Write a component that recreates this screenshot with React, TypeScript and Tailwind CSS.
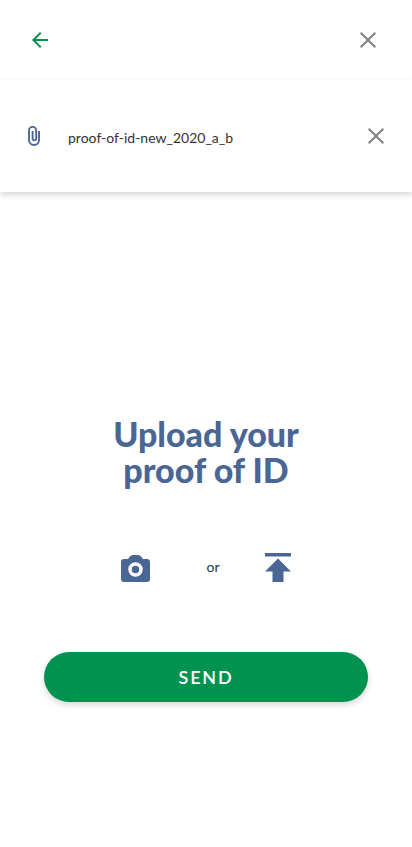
import React from "react";

function CrossIcon() {
  return (
    <svg viewBox="0 0 16 16" className="h-4 w-4" fill="none" stroke="#808080" strokeWidth="2" aria-hidden="true">
      <path d="M0.7 0.7 15.3 15.3M15.3 0.7 0.7 15.3" />
    </svg>
  );
}

function BackIcon() {
  return (
    <svg viewBox="0 0 24 24" className="h-6 w-6" fill="#00924f" aria-hidden="true">
      <path d="M20 11H7.83l5.59-5.59L12 4l-8 8 8 8 1.41-1.41L7.83 13H20v-2z" />
    </svg>
  );
}

function ClipIcon() {
  return (
    <svg viewBox="0 0 12 20" className="h-5 w-3" fill="none" stroke="#4a6694" strokeWidth="1.9" aria-hidden="true">
      <path d="M11 5v9a5 5 0 0 1-10 0V4.500a3.600 3.600 0 0 1 7.200 0V12.600a1.800 1.800 0 0 1-3.600 0V5" />
    </svg>
  );
}

function CameraIcon() {
  return (
    <svg viewBox="0 0 29 27" className="h-[27px] w-[29px]" aria-hidden="true">
      <path
        d="M3 4h3.500C8 4 8.600 0 12 0h5c3.400 0 4 4 5.500 4H26a3 3 0 0 1 3 3v17a3 3 0 0 1-3 3H3a3 3 0 0 1-3-3V7a3 3 0 0 1 3-3z"
        fill="#4a6694"
      />
      <circle cx="14.500" cy="14.500" r="5.500" fill="#4a6694" stroke="#ffffff" strokeWidth="3.500" />
    </svg>
  );
}

function UploadIcon() {
  return (
    <svg viewBox="0 0 26 29" className="h-[29px] w-[26px]" fill="#4a6694" aria-hidden="true">
      <path d="M0 0h26v3.500H0zM13 5.500 26 18.500h-7.500V29h-11V18.500H0z" />
    </svg>
  );
}

export default function App() {
  return (
    <div className="flex min-h-screen flex-col bg-white font-['Lato','Liberation_Sans',sans-serif]">
      <header className="flex h-20 items-center justify-between pr-9 pl-7">
        <button type="button" aria-label="Back">
          <BackIcon />
        </button>
        <button type="button" aria-label="Close">
          <CrossIcon />
        </button>
      </header>

      <section className="flex h-28 items-center px-7 shadow-[0_3px_6px_rgba(0,0,0,0.16)]">
        <ClipIcon />
        <p className="ml-7 flex-1 pt-1 text-sm leading-5 text-[#333333]">proof-of-id-new_2020_a_b</p>
        <button type="button" aria-label="Remove file">
          <CrossIcon />
        </button>
      </section>

      <main className="flex flex-col px-11 pt-56 pb-10">
        <h1 className="text-center text-[34px] leading-9 font-black text-[#4a6694]">
          Upload your
          <br />
          proof of ID
        </h1>
        <div className="mt-[65px] flex items-center justify-center gap-[45px]">
          <button type="button" aria-label="Take a photo" className="w-10 pt-px">
            <CameraIcon />
          </button>
          <span className="pb-0.5 text-sm leading-5 text-[#333333]">or</span>
          <button type="button" aria-label="Choose a file">
            <UploadIcon />
          </button>
        </div>
        <button
          type="button"
          className="mt-[70px] h-[50px] rounded-full bg-[#00924f] text-lg font-semibold tracking-widest text-white shadow-[0_3px_6px_rgba(0,0,0,0.16)]"
        >
          SEND
        </button>
      </main>
    </div>
  );
}
